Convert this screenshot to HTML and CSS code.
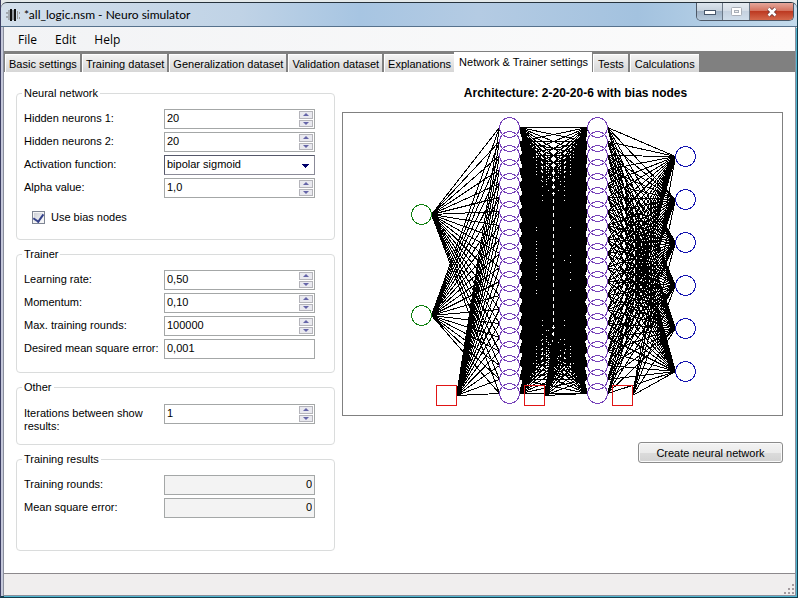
FILE: index.html
```html
<!DOCTYPE html>
<html lang="en">
<head>
<meta charset="utf-8">
<title>*all_logic.nsm - Neuro simulator</title>
<link rel="stylesheet" href="styles.css">
</head>
<body>
<div class="window">
  <header class="titlebar">
    <svg class="app-icon" width="14" height="14" viewBox="0 0 14 14" aria-hidden="true">
      <path d="M1 4v2M1 8v2M3 2v10" stroke="#777" stroke-width="1"/>
      <path d="M5 1v12M9 1v12" stroke="#111" stroke-width="2"/>
      <path d="M7 2v10" stroke="#555" stroke-width="1"/>
      <path d="M11.500 3v8M13.500 4v2M13.500 9v2" stroke="#999" stroke-width="1"/>
    </svg>
    <h1 class="title">*all_logic.nsm - Neuro simulator</h1>
    <div class="caption-buttons">
      <button class="caption minimize" aria-label="Minimize"><svg width="14" height="8" viewBox="0 0 14 8"><rect x="1.500" y="2.500" width="11" height="4" fill="#fff" stroke="#48566a"/></svg></button>
      <button class="caption maximize" aria-label="Maximize"><svg width="14" height="12" viewBox="0 0 14 12"><rect x="2.500" y="1.500" width="10" height="8" rx="1" fill="#fff" stroke="#a9afb8"/><rect x="5.500" y="4.500" width="4" height="2" fill="#eee" stroke="#a9afb8"/></svg></button>
      <button class="caption close" aria-label="Close"><svg width="14" height="12" viewBox="0 0 14 12"><path d="M3.500 2.500l7 7M10.500 2.500l-7 7" stroke="#6b3434" stroke-width="4"/><path d="M3.500 2.500l7 7M10.500 2.500l-7 7" stroke="#fff" stroke-width="2.500"/></svg></button>
    </div>
  </header>
  <div class="client">
    <nav class="menubar">
      <button class="menu">File</button>
      <button class="menu">Edit</button>
      <button class="menu">Help</button>
    </nav>
    <div class="tabs" role="tablist">
      <button class="tab" role="tab">Basic settings</button>
      <button class="tab" role="tab">Training dataset</button>
      <button class="tab" role="tab">Generalization dataset</button>
      <button class="tab" role="tab">Validation dataset</button>
      <button class="tab" role="tab">Explanations</button>
      <button class="tab active" role="tab" aria-selected="true">Network &amp; Trainer settings</button>
      <button class="tab" role="tab">Tests</button>
      <button class="tab" role="tab">Calculations</button>
    </div>
    <main class="page">
      <form class="settings">
        <fieldset class="group network">
          <legend>Neural network</legend>
          <div class="row"><label for="h1">Hidden neurons 1:</label><span class="spin"><input id="h1" value="20"><span class="arrows"><button type="button" class="up" aria-label="Increase"></button><button type="button" class="down" aria-label="Decrease"></button></span></span></div>
          <div class="row"><label for="h2">Hidden neurons 2:</label><span class="spin"><input id="h2" value="20"><span class="arrows"><button type="button" class="up" aria-label="Increase"></button><button type="button" class="down" aria-label="Decrease"></button></span></span></div>
          <div class="row"><label for="act">Activation function:</label><select id="act"><option>bipolar sigmoid</option></select></div>
          <div class="row"><label for="alpha">Alpha value:</label><span class="spin"><input id="alpha" value="1,0"><span class="arrows"><button type="button" class="up" aria-label="Increase"></button><button type="button" class="down" aria-label="Decrease"></button></span></span></div>
          <div class="check"><input type="checkbox" id="bias" checked><label for="bias">Use bias nodes</label></div>
        </fieldset>
        <fieldset class="group trainer">
          <legend>Trainer</legend>
          <div class="row"><label for="rate">Learning rate:</label><span class="spin"><input id="rate" value="0,50"><span class="arrows"><button type="button" class="up" aria-label="Increase"></button><button type="button" class="down" aria-label="Decrease"></button></span></span></div>
          <div class="row"><label for="mom">Momentum:</label><span class="spin"><input id="mom" value="0,10"><span class="arrows"><button type="button" class="up" aria-label="Increase"></button><button type="button" class="down" aria-label="Decrease"></button></span></span></div>
          <div class="row"><label for="max">Max. training rounds:</label><span class="spin"><input id="max" value="100000"><span class="arrows"><button type="button" class="up" aria-label="Increase"></button><button type="button" class="down" aria-label="Decrease"></button></span></span></div>
          <div class="row"><label for="mse">Desired mean square error:</label><input class="field" id="mse" value="0,001"></div>
        </fieldset>
        <fieldset class="group other">
          <legend>Other</legend>
          <div class="row tall"><label for="iter">Iterations between show results:</label><span class="spin"><input id="iter" value="1"><span class="arrows"><button type="button" class="up" aria-label="Increase"></button><button type="button" class="down" aria-label="Decrease"></button></span></span></div>
        </fieldset>
        <fieldset class="group results">
          <legend>Training results</legend>
          <div class="row"><label for="rounds">Training rounds:</label><input class="field readonly" id="rounds" value="0" readonly></div>
          <div class="row"><label for="err">Mean square error:</label><input class="field readonly" id="err" value="0" readonly></div>
        </fieldset>
      </form>
      <section class="architecture">
        <h2>Architecture: 2-20-20-6 with bias nodes</h2>
        <div class="canvas"><svg id="diagram" viewBox="0 0 439 302" role="img" aria-label="Network diagram"></svg></div>
        <button class="create">Create neural network</button>
      </section>
    </main>
    <footer class="statusbar">
      <svg width="12" height="12" viewBox="0 0 12 12" aria-hidden="true"><path d="M9 1h2v2h-2zM5 5h2v2h-2zM9 5h2v2h-2zM1 9h2v2h-2zM5 9h2v2h-2zM9 9h2v2h-2z" fill="#a39b9f"/></svg>
    </footer>
  </div>
</div>
<script src="diagram.js"></script>
</body>
</html>
```
FILE: styles.css
```css
* { box-sizing: border-box; }
html, body { height: 100%; }
body {
  margin: 0;
  overflow: hidden;
  background: #e4e9ea;
  font-family: "Liberation Sans", Arial, sans-serif;
  font-size: 11px;
  line-height: 14px;
  color: #000;
}
button, input, select { font: inherit; color: inherit; margin: 0; }
.window {
  display: flex;
  flex-direction: column;
  height: 100vh;
  padding-top: 2px;
  border: 1px solid #123c4c;
  border-width: 0 1px 2px;
  border-left-color: #3d3f63;
}
.titlebar {
  display: flex;
  align-items: center;
  flex: 0 0 25px;
  padding: 0 3px 0 5px;
  border-top: 1px solid #26323c;
  border-bottom: 1px solid #56718c;
  border-radius: 6px 6px 0 0;
  background: linear-gradient(90deg, #d3dfeb, #c0d3e6 30%, #a7c5e2 45%, #b4cbe3 60%, #a3c2df 80%, #c4dbec);
}
.app-icon { flex: none; }
.title {
  flex: 1;
  margin: 0 0 0 4px;
  font: 12px/20px Lato, "Open Sans", sans-serif;
  white-space: nowrap;
}
.caption-buttons {
  display: flex;
  align-self: flex-start;
  height: 18px;
  border: 1px solid #4d5867;
  border-top: 0;
  border-radius: 0 0 5px 5px;
  overflow: hidden;
}
.caption {
  display: flex;
  align-items: center;
  justify-content: center;
  width: 26px;
  padding: 0;
  border: 0;
  border-right: 1px solid #6b7887;
  background: linear-gradient(#dbe4ed, #c3cfdb 50%, #9fb1c5 50%, #b7cadc);
}
.caption.maximize { width: 27px; background: linear-gradient(#e4eaf0, #d3dce6 50%, #c5d1df 50%, #d0deeb); }
.caption.close { width: 43px; border: 0; background: linear-gradient(#e5a79b, #d4735f 45%, #bd3a22 50%, #d4694c); }
.client {
  display: flex;
  flex-direction: column;
  flex: 1;
  min-height: 0;
  margin-left: 2px;
  margin-right: 1px;
  border: 1px solid #8a8f9c;
  border-top: 0;
  background: #fff;
  box-shadow: 1px 1px 0 #4fb5cf, -2px 0 0 #c5c8da;
}
.menubar {
  display: flex;
  flex: 0 0 24px;
  padding-left: 6px;
  background: linear-gradient(90deg, #f2f3f5, #fcfcfc);
}
.menu {
  padding: 0 8px;
  margin-right: 2px;
  border: 0;
  background: none;
  font: 12px/23px "Open Sans", "Noto Sans", sans-serif;
}
.tabs {
  display: flex;
  align-items: flex-end;
  flex: 0 0 21px;
  padding-left: 1px;
  background: #808080;
}
.tab {
  height: 18px;
  padding: 0 3px;
  margin-right: 2px;
  border: 0;
  border-top: 1px solid #fff;
  border-left: 1px solid #fff;
  background: linear-gradient(#f3f3f3, #d6d6d6);
  line-height: 16px;
  white-space: nowrap;
}
.tab.active {
  height: 20px;
  padding: 0 4px 2px;
  margin-left: -2px;
  margin-right: 1px;
  background: #fff;
}
.tab.active ~ .tab { padding: 0 4px; }
.page { display: flex; flex: 1; min-height: 0; padding: 14px 12px 0; gap: 7px; }
.settings { flex: 0 0 319px; min-width: 0; display: flex; flex-direction: column; }
.group {
  min-width: 0;
  margin: 0 0 7px;
  padding: 0 19px 0 7px;
  border: 1px solid #dadcdc;
  border-radius: 4px;
}
.group legend { padding: 0 2px; margin-left: -2px; height: 14px; }
.network { height: 154px; }
.trainer { height: 126px; }
.other { height: 65px; }
.results { height: 99px; margin: 0; }
.row { display: flex; align-items: center; height: 20px; margin-bottom: 3px; }
.network .row:first-of-type, .trainer .row:first-of-type, .results .row:first-of-type { margin-top: 9px; }
.row label { flex: 0 0 140px; padding-bottom: 2px; white-space: nowrap; }
.row.tall { margin-top: 10px; }
.row.tall label { white-space: normal; align-self: flex-start; padding: 3px 12px 0 0; line-height: 13px; }
.spin, .field, select {
  flex: 1;
  min-width: 0;
  height: 20px;
  border: 1px solid #a4a7a7;
  border-radius: 0;
  background: #fff;
}
.spin { display: flex; padding: 1px; }
.spin input { flex: 1; min-width: 0; padding: 0 1px 2px; border: 0; background: none; outline: 0; }
.field { padding: 0 2px 2px; }
.field.readonly { background: #f3f3f3; text-align: right; }
select {
  appearance: none;
  padding: 0 2px 2px;
  border-color: #55586a #8b8b98 #8b8b98 #55586a;
  background:
    linear-gradient(#00006a, #00006a) no-repeat right 5px top 8px / 7px 1px,
    linear-gradient(#00006a, #00006a) no-repeat right 6px top 9px / 5px 1px,
    linear-gradient(#00006a, #00006a) no-repeat right 7px top 10px / 3px 1px,
    linear-gradient(#00006a, #00006a) no-repeat right 8px top 11px / 1px 1px,
    #fff;
}
.arrows { display: flex; flex-direction: column; flex: 0 0 14px; gap: 1px; }
.arrows button {
  flex: 1;
  min-height: 0;
  padding: 0;
  border: 1px solid #b4b4ba;
  background-color: #e9e9ef;
}
.up, .down { display: flex; align-items: center; justify-content: center; }
.up::after, .down::after { content: ""; border: 3px solid transparent; }
.up::after { border-top: 0; border-bottom-color: #6565a8; }
.down::after { border-bottom: 0; border-top-color: #6565a8; }
.check { display: flex; align-items: center; gap: 6px; height: 14px; margin: 12px 0 0 8px; }
.check input {
  appearance: none;
  width: 13px;
  height: 13px;
  border: 1px solid #7e8594;
  background: linear-gradient(135deg, #c9ccd4, #fff);
  box-shadow: inset 0 0 0 1px #f4f4f4;
  display: grid;
  place-items: center;
}
.check input:checked::after {
  content: "";
  width: 5px;
  height: 8px;
  border: solid #34418a;
  border-width: 0 2px 2px 0;
  transform: rotate(35deg);
}
.architecture { flex: 1; min-width: 0; display: flex; flex-direction: column; }
.architecture h2 {
  margin: 0 0 12px;
  padding-left: 26px;
  font: bold 12px/14px "Liberation Sans", sans-serif;
  text-align: center;
}
.canvas { border: 1px solid #808080; background: #fff; }
.canvas svg { display: block; width: 100%; }
.create {
  align-self: flex-end;
  width: 145px;
  height: 21px;
  margin-top: 26px;
  padding: 0;
  border: 1px solid #8b8b8b;
  border-radius: 3px;
  background: linear-gradient(#f3f3f3, #ebebeb 50%, #dcdcdc 50%, #d2d2d2);
  box-shadow: inset 0 0 0 1px #fafafa;
}
.statusbar {
  display: flex;
  justify-content: flex-end;
  align-items: flex-end;
  flex: 0 0 22px;
  border-top: 1px solid #8c898c;
  background: #f0eeee;
}
.connection { stroke: #000; shape-rendering: crispEdges; }
.node { fill: none; shape-rendering: crispEdges; }
.input { stroke: #108010; }
.hidden { stroke: #7540b8; }
.output { stroke: #1515b0; }
.bias { stroke: #e01515; }
```
FILE: diagram.js
```js
const svg = document.getElementById("diagram");
const R = 10;
const add = (tag, attrs) => {
  const el = document.createElementNS("http://www.w3.org/2000/svg", tag);
  for (const key in attrs) el.setAttribute(key, attrs[key]);
  svg.appendChild(el);
};
const column = (kind, x, first, step, count) =>
  Array.from({ length: count }, (_, i) => ({ kind, x, y: first + step * i }));

const layers = [
  column("input", 78.5, 101.5, 101, 2),
  column("hidden", 166.5, 14.5, 14, 20),
  column("hidden", 254.5, 14.5, 14, 20),
  column("output", 342.5, 43.5, 43, 6)
];
const biases = [103.5, 191.5, 279.5].map(x => ({ x, y: 282.5 }));

for (let l = 0; l < 3; l++) {
  for (const from of [...layers[l], biases[l]]) {
    for (const to of layers[l + 1]) {
      add("line", { class: "connection", x1: from.x + R, y1: from.y, x2: to.x - R, y2: to.y });
    }
  }
}
for (const node of layers.flat()) {
  add("circle", { class: "node " + node.kind, cx: node.x, cy: node.y, r: R });
}
for (const b of biases) {
  add("rect", { class: "node bias", x: b.x - R, y: b.y - R, width: 2 * R, height: 2 * R });
}
```
